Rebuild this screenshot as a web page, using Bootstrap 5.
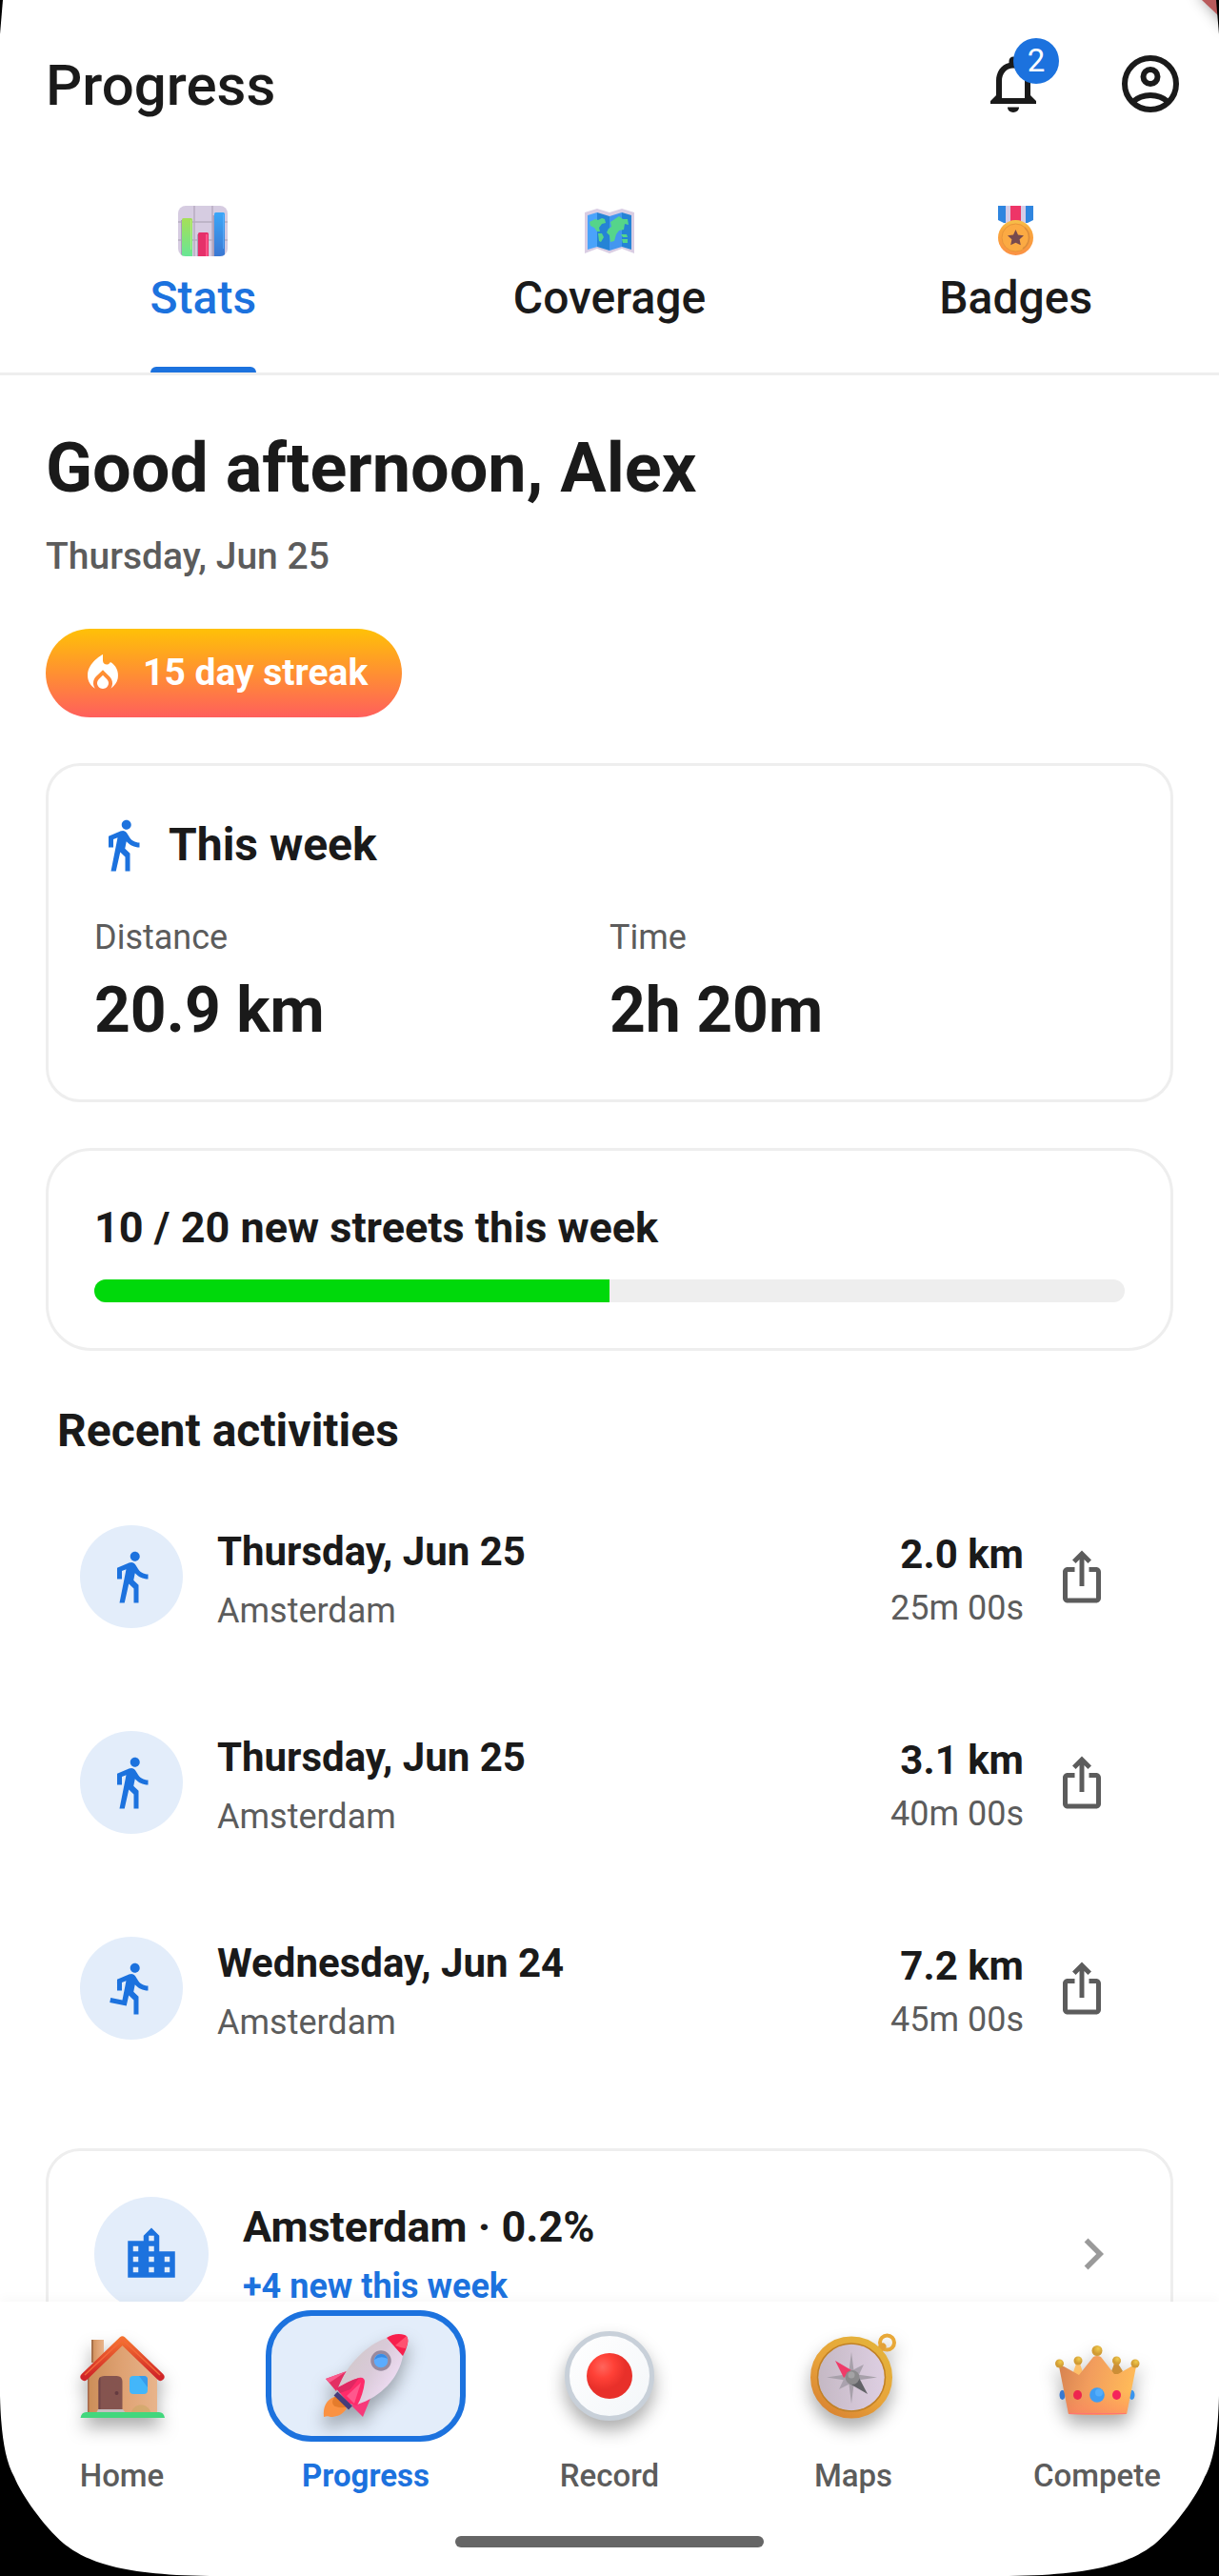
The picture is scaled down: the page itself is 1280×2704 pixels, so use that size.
<!DOCTYPE html>
<html lang="en">
<head>
<meta charset="utf-8">
<meta name="viewport" content="width=device-width, initial-scale=1">
<title>Progress</title>
<link href="https://cdn.jsdelivr.net/npm/bootstrap@5.3.0/dist/css/bootstrap.min.css" rel="stylesheet">
<style>
:root{--ink:#1a1a1a;--soft:#5c5c5c;--brand:#1c72de;--tint:#e3edfa;--line:#eee}
body{font-family:Roboto,"Liberation Sans",sans-serif;color:var(--ink);background:#fff}
.screen{height:100vh;position:relative;overflow:hidden}
svg{display:block;flex:none}
a{color:inherit;text-decoration:none}
.plain{background:none;border:0;padding:0;color:inherit}
.topbar{height:176px;padding:0 36px 0 48px}
.topbar h1{font-size:60px;line-height:68px;font-weight:500}
.actions{gap:72px}
.count{position:absolute;left:36px;top:-12px;width:48px;height:48px;border-radius:50%;background:var(--brand);color:#fff;font-size:33px;line-height:48px;text-align:center}
.tabs{border-bottom:3px solid var(--line);height:218px}
.tab-in{padding-top:40px;gap:15px;height:100%;font-size:48px;line-height:56px;font-weight:500}
.tab-in::after{content:"";height:6px;margin-top:auto;align-self:stretch;border-radius:9px 9px 0 0}
.on .tab-in{color:var(--brand)}
.on .tab-in::after{background:var(--brand)}
.feed{min-height:0;padding:56px 48px 0}
.hello{font-size:72px;line-height:84px;font-weight:700;margin:0 0 26px}
.today{font-size:39px;line-height:48px;color:var(--soft);font-weight:500;margin:0 0 52px}
.streak{background:linear-gradient(#ffc107,#ff5f5c);color:#fff;height:93px;padding:0 36px;gap:18px;font-size:39px;font-weight:700;border-radius:48px;margin-bottom:48px}
.panel{border:3px solid var(--line);border-radius:36px;padding:48px;margin-bottom:48px}
.panel.goal{border-radius:48px;margin-bottom:56px}
.panel h2{font-size:48px;line-height:70px;font-weight:700;gap:18px;margin-bottom:41px}
.lbl{font-size:36px;line-height:42px;color:var(--soft)}
.big{font-size:66px;line-height:84px;font-weight:700;margin:14px 0 3px}
.panel.goal h2{font-size:45px;line-height:66px;margin-bottom:21px}
.progress{height:24px;border-radius:12px;background:var(--line)}
.progress-bar{background:#00d90b}
.recent{font-size:48px;line-height:56px;font-weight:700;margin:0 12px 17px}
.act{height:216px;padding:0 66px 0 36px}
.disc{width:108px;height:108px;border-radius:50%;background:var(--tint);color:var(--brand);flex:none}
.disc.lg{width:120px;height:120px}
.names{margin-left:36px;display:flex;flex-direction:column;gap:14px}
.share{margin-left:31px;color:var(--soft)}
.t1{font-size:42px;line-height:54px;font-weight:700}
.t1.city{font-size:45px}
.t2{font-size:36px;line-height:42px;color:var(--soft)}
.t2.hot{color:var(--brand);font-weight:700}
.cityrow{margin-top:60px;gap:36px;padding-right:48px}
.dock{background:#fff;height:288px;padding-top:9px;position:relative;box-shadow:0 -3px 12px rgba(0,0,0,.03)}
.dock a{flex:1 1 0;font-size:33px;line-height:40px;font-weight:500;color:var(--soft)}
.spot{width:210px;height:138px;border:6px solid transparent;border-radius:48px;margin-bottom:16px}
.dock a.here{color:var(--brand);font-weight:700}
.here .spot{background:var(--tint);border-color:var(--brand)}
.spot svg{filter:drop-shadow(0 10px 9px rgba(0,0,0,.32))}
.grip{width:324px;height:12px;border-radius:6px;background:#666;margin:43px auto 0}
.edge{position:absolute;pointer-events:none}
.bl{left:0;bottom:0}.br{right:0;bottom:0;transform:scaleX(-1)}
.tl{left:0;top:0}.tr{right:0;top:0}
</style>
<script src="https://cdn.jsdelivr.net/npm/bootstrap@5.3.0/dist/js/bootstrap.bundle.min.js"></script>
</head>
<body>
<svg width="0" height="0" class="position-absolute" aria-hidden="true">
  <symbol id="walk" viewBox="0 0 24 24"><path fill="currentColor" d="M13.5 5.5c1.1 0 2-.9 2-2s-.9-2-2-2-2 .9-2 2 .9 2 2 2zM9.8 8.9L7 23h2.1l1.8-8 2.1 2v6h2v-7.500l-2.100-2 .6-3C14.800 12 16.800 13 19 13v-2c-1.900 0-3.500-1-4.300-2.400l-1-1.600c-.4-.6-1-1-1.700-1-.3 0-.5.1-.8.1L6 8.300V13h2V9.600l1.800-.7"/></symbol>
  <symbol id="run" viewBox="0 0 24 24"><path fill="currentColor" d="M13.490 5.480c1.100 0 2-.9 2-2s-.9-2-2-2-2 .9-2 2 .9 2 2 2zm-3.600 13.900l1-4.400 2.100 2v6h2v-7.500l-2.100-2 .6-3c1.300 1.500 3.300 2.500 5.500 2.500v-2c-1.900 0-3.500-1-4.300-2.400l-1-1.600c-.4-.6-1-1-1.700-1-.3 0-.5.1-.8.1l-5.200 2.200v4.700h2v-3.400l1.800-.7-1.600 8.100-4.900-1-.4 2 7 1.400z"/></symbol>
  <symbol id="share" viewBox="0 0 24 24"><path fill="currentColor" d="M16 5l-1.420 1.420-1.590-1.590V16h-1.980V4.830L9.420 6.420 8 5l4-4 4 4zm4 5v11c0 1.100-.9 2-2 2H6c-1.110 0-2-.9-2-2V10c0-1.110.890-2 2-2h3v2H6v11h12V10h-3V8h3c1.100 0 2 .890 2 2z"/></symbol>
</svg>

<div class="screen d-flex flex-column">
  <header class="topbar flex-shrink-0 d-flex align-items-center justify-content-between">
    <h1 class="m-0 pt-1">Progress</h1>
    <div class="actions d-flex">
      <button class="plain position-relative" aria-label="Notifications">
        <svg width="72" height="72" viewBox="0 0 24 24"><path fill="#1a1a1a" d="M12 22c1.100 0 2-.7 2-1.800h-4c0 1.100.9 1.800 2 1.800zm6-6v-5c0-3.070-1.630-5.640-4.500-6.320V4c0-.830-.670-1.500-1.500-1.500s-1.500.670-1.500 1.500v.680C7.640 5.360 6 7.920 6 11v5l-2 2v1h16v-1l-2-2zm-2 1H8v-6c0-2.480 1.510-4.500 4-4.500s4 2.020 4 4.500v6z"/></svg>
        <span class="count">2</span>
      </button>
      <button class="plain" aria-label="Account">
        <svg width="72" height="72" viewBox="0 0 24 24"><g fill="none" stroke="#1a1a1a" stroke-width="2"><circle cx="12" cy="12" r="9"/><circle cx="12" cy="9.500" r="2.500"/><path d="M5.800 18.300c3.500-3.100 8.900-3.100 12.400 0"/></g></svg>
      </button>
    </div>
  </header>

  <nav class="tabs flex-shrink-0 row g-0">
    <button class="plain col on h-100"><span class="tab-in d-inline-flex flex-column align-items-center">
      <svg width="54" height="54" viewBox="0 0 54 54"><defs><clipPath id="rc"><rect x="1" width="52" height="53" rx="8"/></clipPath><linearGradient id="g1" x2="0" y2="1"><stop stop-color="#a6df58"/><stop offset="1" stop-color="#62e79b"/></linearGradient><linearGradient id="g2" x2="0" y2="1"><stop stop-color="#3ba6f8"/><stop offset="1" stop-color="#3b73cf"/></linearGradient></defs><g clip-path="url(#rc)"><path fill="#d6cce1" d="M0 0h54v54H0z"/><path stroke="#b7adc0" stroke-width="1.500" d="M18 0v54M37 0v54M0 17h54M0 36h54"/><path fill="#a99db8" d="M4 15h2v39H4zM21 30h2v24h-2zM37.500 10h2v44h-2z"/><rect x="5" y="13" width="11" height="44" rx="1.500" fill="url(#g1)"/><rect x="22" y="28" width="11" height="30" rx="1.500" fill="#e5306a"/><path fill="#ff568a" d="M30 30h2v24h-2z"/><path fill="#cdf58b" opacity=".6" d="M14 15h1v31h-1z"/><rect x="39" y="7" width="11" height="50" rx="1.500" fill="url(#g2)"/><path fill="#6fb9ff" opacity=".6" d="M48 9h1v36h-1z"/></g></svg>
      <span>Stats</span></span></button>
    <button class="plain col h-100"><span class="tab-in d-inline-flex flex-column align-items-center">
      <svg width="54" height="54" viewBox="0 0 54 54"><path fill="#d9cde3" d="M1 7l13-4 13 4 13-4 13 4v43l-13-5-13 5-13-5-13 5z"/><path fill="#4aa3fb" d="M4 10l10-3v36L4 46z"/><path fill="#2583d6" d="M14 7l13 4v36l-13-4z"/><path fill="#4396ef" d="M27 11l13-4v36l-13 4z"/><path fill="#2583d6" d="M40 7l10 3v36l-10-3z"/><path fill="#55d58a" d="M6 17l6-3 3 1 4-2 3 1 1 4-4 1-3 4 1 4-3 0-3-4-4-2zM15 29l4 0 2 4-3 5-2-1zM28 17l6-4 3-2 4 3 5 0 1 6-4-1-1 6-5 1-3 4-2 7-4 1-1-7-3-3 2-4 3-2zM39 30l6 0 1 3-5 0zM40 35l6 0 0 4-5 0z"/></svg>
      <span>Coverage</span></span></button>
    <button class="plain col h-100"><span class="tab-in d-inline-flex flex-column align-items-center">
      <svg width="54" height="54" viewBox="0 0 54 54"><defs><linearGradient id="g3" x2="0" y2="1"><stop stop-color="#f6c24a"/><stop offset=".3" stop-color="#f9a63c"/><stop offset="1" stop-color="#fb9245"/></linearGradient></defs><path fill="#2f85df" d="M8 0h37v15l-6 3H14l-6-3z"/><path fill="#d6cce6" d="M16 0h21v18H16z"/><path fill="#ee3567" d="M21 0h11v18H21z"/><circle cx="26.500" cy="33.500" r="18.500" fill="url(#g3)"/><circle cx="26.500" cy="33.500" r="14.500" fill="#fbaa43" stroke="#e8963a" stroke-width="1"/><path fill="none" stroke="#dc8d3c" stroke-width="1.500" d="M36 23a14 14 0 0 1-2 22"/><path fill="#774a4e" d="M26.500 25l2.500 5.500 6 .7-4.400 4 1.200 6-5.300-2.500-5.300 2.500 1.200-6-4.400-4 6-.7z"/></svg>
      <span>Badges</span></span></button>
  </nav>

  <main class="feed flex-grow-1 overflow-hidden">
    <h2 class="hello">Good afternoon, Alex</h2>
    <p class="today">Thursday, Jun 25</p>
    <div class="streak d-inline-flex align-items-center">
      <svg width="48" height="48" viewBox="0 0 24 24" fill="#fff"><path d="M12 12.900l-2.130 2.090C9.310 15.550 9 16.280 9 17.060 9 18.680 10.350 20 12 20s3-1.320 3-2.940c0-.780-.310-1.520-.870-2.070z"/><path d="M16 6l-.440.550C14.380 8.020 12 7.190 12 5.300V2S4 6 4 13c0 2.920 1.560 5.470 3.890 6.860C7.330 19.070 7 18.100 7 17.060c0-1.320.520-2.560 1.470-3.500L12 10.100l3.530 3.470c.950.930 1.470 2.170 1.470 3.500 0 1.020-.310 1.960-.850 2.750 1.890-1.150 3.290-3.060 3.710-5.300C20.540 10.790 18.780 7.650 16 6z"/></svg>
      15 day streak
    </div>

    <section class="panel">
      <h2 class="d-flex align-items-center"><svg width="60" height="60" color="#1c72de"><use href="#walk"/></svg>This week</h2>
      <div class="row g-0">
        <div class="col"><div class="lbl">Distance</div><div class="big">20.9 km</div></div>
        <div class="col"><div class="lbl">Time</div><div class="big">2h 20m</div></div>
      </div>
    </section>

    <section class="panel goal">
      <h2>10 / 20 new streets this week</h2>
      <div class="progress" role="progressbar" aria-label="New streets" aria-valuenow="10" aria-valuemin="0" aria-valuemax="20"><div class="progress-bar" style="width:50%"></div></div>
    </section>

    <h2 class="recent">Recent activities</h2>
    <div class="act d-flex align-items-center">
      <span class="disc d-flex align-items-center justify-content-center"><svg width="60" height="60"><use href="#walk"/></svg></span>
      <div class="names pt-1"><div class="t1">Thursday, Jun 25</div><div class="t2">Amsterdam</div></div>
      <div class="ms-auto text-end pt-1 d-flex flex-column gap-2"><div class="t1">2.0 km</div><div class="t2">25m 00s</div></div>
      <button class="plain share" aria-label="Share"><svg width="60" height="60"><use href="#share"/></svg></button>
    </div>
    <div class="act d-flex align-items-center">
      <span class="disc d-flex align-items-center justify-content-center"><svg width="60" height="60"><use href="#walk"/></svg></span>
      <div class="names pt-1"><div class="t1">Thursday, Jun 25</div><div class="t2">Amsterdam</div></div>
      <div class="ms-auto text-end pt-1 d-flex flex-column gap-2"><div class="t1">3.1 km</div><div class="t2">40m 00s</div></div>
      <button class="plain share" aria-label="Share"><svg width="60" height="60"><use href="#share"/></svg></button>
    </div>
    <div class="act d-flex align-items-center">
      <span class="disc d-flex align-items-center justify-content-center"><svg width="60" height="60"><use href="#run"/></svg></span>
      <div class="names pt-1"><div class="t1">Wednesday, Jun 24</div><div class="t2">Amsterdam</div></div>
      <div class="ms-auto text-end pt-1 d-flex flex-column gap-2"><div class="t1">7.2 km</div><div class="t2">45m 00s</div></div>
      <button class="plain share" aria-label="Share"><svg width="60" height="60"><use href="#share"/></svg></button>
    </div>

    <a href="#city" class="panel cityrow d-flex align-items-center">
      <span class="disc lg d-flex align-items-center justify-content-center"><svg width="66" height="66" viewBox="0 0 24 24"><path fill="currentColor" d="M15 11V5l-3-3-3 3v2H3v14h18V11h-6zm-8 8H5v-2h2v2zm0-4H5v-2h2v2zm0-4H5V9h2v2zm6 8h-2v-2h2v2zm0-4h-2v-2h2v2zm0-4h-2V9h2v2zm0-4h-2V5h2v2zm6 12h-2v-2h2v2zm0-4h-2v-2h2v2z"/></svg></span>
      <div class="names ms-0 me-auto"><div class="t1 city">Amsterdam · 0.2%</div><div class="t2 hot">+4 new this week</div></div>
      <svg width="66" height="66" viewBox="0 0 24 24"><path fill="#9a9a9a" d="M10 6L8.590 7.410 13.170 12l-4.580 4.590L10 18l6-6z"/></svg>
    </a>
  </main>

  <footer class="dock flex-shrink-0">
    <nav class="d-flex">
      <a href="#home" class="d-flex flex-column align-items-center"><span class="spot d-flex justify-content-center">
        <svg width="120" height="126" viewBox="0 0 120 126"><defs><linearGradient id="h1"><stop stop-color="#cb8d58"/><stop offset=".5" stop-color="#dfa273"/><stop offset="1" stop-color="#e8b48b"/></linearGradient><linearGradient id="h2" x2="0" y2="1"><stop stop-color="#f3702f"/><stop offset="1" stop-color="#d02428"/></linearGradient></defs><path fill="url(#h1)" d="M28 25h13v24H28z"/><path fill="#a9714a" d="M28 25h2v24h-2z"/><path fill="url(#h1)" d="M24 57l37-30 36 30v45H24z"/><path fill="#a4674a" d="M24 60h1.500v42H24z"/><path fill="#cfa868" d="M70 101c2-10 18-10 20 0z" opacity=".7"/><path fill="none" stroke="url(#h2)" stroke-width="8" stroke-linejoin="round" stroke-linecap="round" d="M20.500 64l40-38.500L100.500 64"/><path fill="none" stroke="#f4683a" stroke-width="1.500" d="M21 62l39.500-37L100 62"/><path fill="#85544f" d="M35.500 69q0-6 6-6h13q6 0 6 6v30h-25z"/><path fill="#714448" d="M35.500 69q0-4 2-5v35h-2z"/><circle cx="54.500" cy="81" r="2" fill="#643b40"/><rect x="68" y="63" width="19" height="19" rx="4" fill="#43b6fa"/><path fill="#389bea" d="M78 63h5q4 0 4 4v8z"/><path fill="#c6bfc1" d="M35 98h26l3 4H33z"/><path fill="#42d77d" d="M16.500 107q1-6 6-6H99q5 0 6 6z"/></svg></span>Home</a>
      <a href="#progress" class="here d-flex flex-column align-items-center" aria-current="page"><span class="spot d-flex justify-content-center">
        <svg width="120" height="126" viewBox="0 0 120 126"><defs><linearGradient id="r1" x1=".2" y1=".3" x2=".8" y2=".7"><stop stop-color="#d3c9cd"/><stop offset=".5" stop-color="#d9cad8"/><stop offset="1" stop-color="#ecdaf0"/></linearGradient></defs><path fill="#fb9242" d="M27 85c-8 3-12 10-11 21 3-1 5-1 7 0 6 0 13-2 17-9z"/><path fill="#e57c2c" d="M28 84c-6 8-3 13 11 12l1-2-10-10z"/><path fill="#e32f63" d="M40 58L18 66l11 13z"/><path fill="#fb5b8d" d="M40 58L18 66l4 4z"/><path fill="#f7397a" d="M66 84l-9 22-12-12z"/><path fill="url(#r1)" d="M82 23C62 30 40 50 31 76l20 17c25-8 44-28 48-51z"/><path fill="#f71f4c" d="M82 23c6-4 13-5 19-3 3 1 4 5 3 9-1 5-3 9-5 13z"/><path fill="#ff5170" d="M91 31l12-10q3 6-1 13-4 0-11-3z"/><circle cx="76" cy="47" r="9" fill="#5bacff" stroke="#988a9f" stroke-width="3.500"/><path fill="#388be5" d="M69 46q2-6 7-6t7 5q-7-4-14 1z"/><path fill="#ff2b6a" d="M29 76c8-4 16-9 24-11 4-1 6 1 6 4-1 9-4 18-8 25l-9-2z"/><path fill="#e02862" d="M29 76c8-4 16-9 24-11l-9 12-11 4z"/><path fill="#ff578d" d="M40 84l15-14-7 22z"/><path stroke="#473d79" stroke-width="5.500" d="M28.500 81.500l15.500 15"/></svg></span>Progress</a>
      <a href="#record" class="d-flex flex-column align-items-center"><span class="spot d-flex justify-content-center">
        <svg width="120" height="126" viewBox="0 0 120 126"><defs><radialGradient id="c1" cx=".35" cy=".3"><stop stop-color="#ff655c"/><stop offset=".5" stop-color="#ff4137"/><stop offset="1" stop-color="#e8302a"/></radialGradient><linearGradient id="c2" x2="1" y2="1"><stop stop-color="#fff"/><stop offset="1" stop-color="#f3f6f9"/></linearGradient></defs><circle cx="60" cy="63" r="44.500" fill="url(#c2)" stroke="#c8d0d9" stroke-width="5"/><circle cx="60" cy="63" r="24" fill="url(#c1)"/></svg></span>Record</a>
      <a href="#maps" class="d-flex flex-column align-items-center"><span class="spot d-flex justify-content-center">
        <svg width="120" height="126" viewBox="0 0 120 126"><defs><linearGradient id="m1" x1="1" y1="0" x2=".3" y2="1"><stop stop-color="#e3b53a"/><stop offset=".6" stop-color="#e8a43a"/><stop offset="1" stop-color="#db8833"/></linearGradient><linearGradient id="m2"><stop stop-color="#c3b7c2"/><stop offset="1" stop-color="#dfd0e4"/></linearGradient></defs><circle cx="95.500" cy="28" r="7.500" fill="none" stroke="#e8a838" stroke-width="4"/><path stroke="#e3a138" stroke-width="7" stroke-linecap="round" d="M85 38l6-6"/><circle cx="58" cy="64.500" r="39" fill="url(#m2)" stroke="url(#m1)" stroke-width="8"/><circle cx="58" cy="64.500" r="35.500" fill="none" stroke="#c18127" stroke-width="1.500"/><path fill="#a7a0aa" d="M58 38l3 23 24 3.500-24 3.500-3 24-3-24-23-3.500L55 61z"/><path fill="#aaa2ae" d="M71 51l-8 17-18 9 8-17z"/><path fill="#ef3b69" d="M41 47l17 10-8 8z"/><path fill="#626367" d="M75 82L56 71l9-8z"/><circle cx="59" cy="64.500" r="7.500" fill="#8c8b8d"/><circle cx="58" cy="62" r="3.500" fill="#a4a3a5"/></svg></span>Maps</a>
      <a href="#compete" class="d-flex flex-column align-items-center"><span class="spot d-flex justify-content-center">
        <svg width="120" height="126" viewBox="0 0 120 126"><defs><linearGradient id="k1" x2="1" y2=".2"><stop stop-color="#d4804f"/><stop offset=".45" stop-color="#f29d5d"/><stop offset="1" stop-color="#ffba59"/></linearGradient><linearGradient id="k2" x2="0" y2="1"><stop offset=".6" stop-color="#ff7b5a" stop-opacity="0"/><stop offset="1" stop-color="#ff7461" stop-opacity=".5"/></linearGradient><radialGradient id="k3" cx=".6" cy=".3"><stop stop-color="#f0ca4b"/><stop offset="1" stop-color="#d19b34"/></radialGradient></defs><ellipse cx="23.500" cy="83" rx="3" ry="5" fill="#3779d2"/><ellipse cx="96.500" cy="83" rx="3" ry="5" fill="#3995ee"/><path fill="#fdbf69" d="M38 50h4l4 12H34z"/><path fill="#cc8e36" d="M78 50h4l5 8-6 7-7-4z"/><path fill="url(#k1)" d="M20 53l5 0 16 9 15-19q4-2 8 0l14 18 4 0 14-8 5 0-10 50q-30 2-61 0z"/><path fill="url(#k2)" d="M20 53l5 0 16 9 15-19q4-2 8 0l14 18 4 0 14-8 5 0-10 50q-30 2-61 0z"/><path stroke="#ff7571" d="M31 102.500h59"/><g fill="url(#k3)"><circle cx="60" cy="36.500" r="5.500"/><circle cx="40" cy="47" r="4.500"/><circle cx="80.500" cy="47" r="4.500"/><circle cx="20.500" cy="50" r="4.500"/><circle cx="100" cy="50" r="4.500"/></g><circle cx="60" cy="83" r="7.800" fill="#3f9df3"/><circle cx="62" cy="80.500" r="4" fill="#54aefb"/><ellipse cx="39.500" cy="83" rx="4.500" ry="5" fill="#ee254f"/><ellipse cx="80.500" cy="83" rx="4.500" ry="5" fill="#f5245b"/></svg></span>Compete</a>
    </nav>
    <div class="grip"></div>
  </footer>

  <svg class="edge bl" width="240" height="200" aria-hidden="true"><path d="M0 11C1 50 5 78 15 96 22 114 46 148 67 166 90 184 125 200 230 200H0z"/></svg>
  <svg class="edge br" width="240" height="200" aria-hidden="true"><path d="M0 11C1 50 5 78 15 96 22 114 46 148 67 166 90 184 125 200 230 200H0z"/></svg>
  <svg class="edge tl" width="6" height="40" aria-hidden="true"><path d="M0 0h3L0 36z"/></svg>
  <svg class="edge tr" width="100" height="60" aria-hidden="true"><defs><filter id="bl" x="-1" y="-1" width="3" height="3"><feGaussianBlur stdDeviation="9"/></filter></defs><path d="M78 -14l36 44V-14z" opacity=".6" filter="url(#bl)"/><path fill="#b95a5b" d="M82 0l18 17V0z"/><path d="M97 0h3v36z"/></svg>
</div>
</body>
</html>
